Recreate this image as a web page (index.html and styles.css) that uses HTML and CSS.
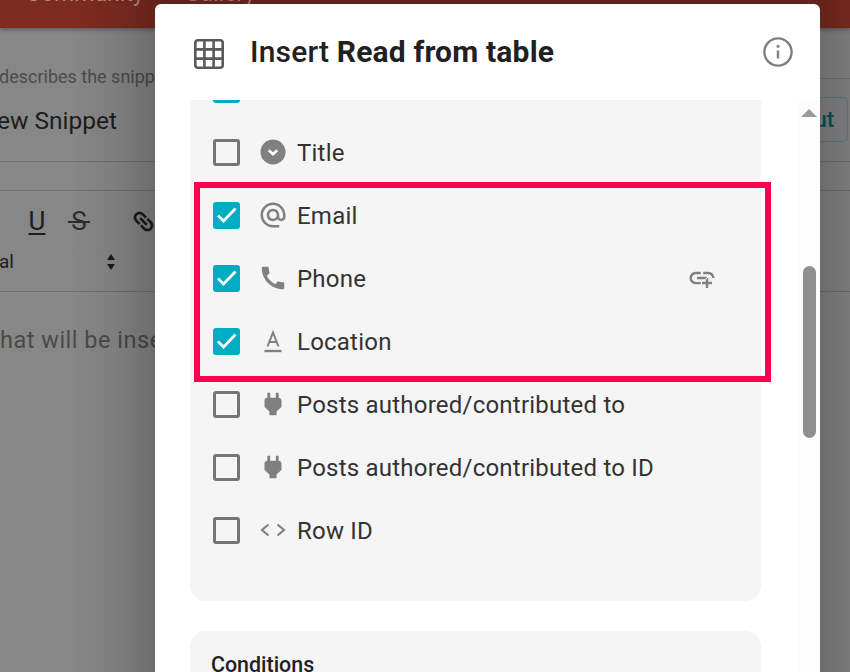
FILE: index.html
```html
<!DOCTYPE html>
<html lang="en">
<head>
<meta charset="utf-8">
<title>Insert Read from table</title>
<link rel="stylesheet" href="styles.css">
</head>
<body>
<div class="page">
  <header class="topbar">
    <span class="nav-item nav-community">Community</span>
    <span class="nav-item nav-gallery">Gallery</span>
  </header>
  <div class="label-row">
    <span class="label">describes the snipp</span>
    <span class="label-rule"></span>
  </div>
  <div class="name-row">
    <span class="name">ew Snippet</span>
    <span class="ghost-btn">ut</span>
  </div>
  <div class="strip"></div>
  <div class="toolbar">
    <div class="tool-line">
      <span class="tool tool-u">U</span>
      <span class="tool tool-s">S</span>
      <svg class="tool-link" viewBox="0 0 24 24"><path d="M3.9 12c0-1.71 1.39-3.1 3.1-3.1h4V7H7c-2.76 0-5 2.24-5 5s2.24 5 5 5h4v-1.9H7c-1.71 0-3.1-1.39-3.1-3.1zM8 13h8v-2H8v2zm9-6h-4v1.9h4c1.71 0 3.1 1.39 3.1 3.1s-1.39 3.1-3.1 3.1h-4V17h4c2.76 0 5-2.24 5-5s-2.24-5-5-5z"/></svg>
    </div>
    <div class="tool-line2">
      <span class="font-name">al</span>
      <svg class="sort" viewBox="0 0 10 16"><path d="M5 0l4 6H1zM5 16l-4-6h8z"/></svg>
    </div>
  </div>
  <div class="editor">hat will be inse</div>
</div>

<section class="modal">
  <div class="modal-head">
    <svg class="grid-icon" viewBox="0 0 30 30"><rect x="1.3" y="1.3" width="27.4" height="27.4" rx="2.5"/><path d="M10.4 1.5v27M19.6 1.500v27M1.5 10.4h27M1.5 19.6h27"/></svg>
    <h1 class="modal-title"><span class="title-light">Insert</span> Read from table</h1>
    <svg class="info-icon" viewBox="0 0 30 30"><circle cx="15" cy="15" r="13.6"/><path class="info-stem" d="M15 13.5v8"/><circle class="info-dot" cx="15" cy="9.3" r="1.5"/></svg>
  </div>
  <div class="modal-body">
    <div class="col">
      <div class="panel panel-fields">
        <div class="rows">
          <div class="row"><span class="box on"></span></div>
          <div class="row">
            <span class="box"></span>
            <svg class="ico" viewBox="0 0 30 30"><circle class="fill" cx="15" cy="15" r="12.5"/><path class="white-stroke" d="M10.8 13.3l4.2 4 4.2-4"/></svg>
            <span class="field">Title</span>
          </div>
          <div class="row">
            <span class="box on"><svg class="tick" viewBox="0 0 27 27"><path d="M5 13.500l5.500 5.500 12-12.500"/></svg></span>
            <svg class="ico" viewBox="0 0 24 24"><path class="fill" d="M12 1.95c-5.52 0-10 4.48-10 10s4.48 10 10 10h5v-2h-5c-4.34 0-8-3.66-8-8s3.66-8 8-8 8 3.66 8 8v1.43c0 .79-.71 1.57-1.5 1.57s-1.5-.78-1.5-1.57v-1.43c0-2.76-2.24-5-5-5s-5 2.24-5 5 2.24 5 5 5c1.38 0 2.64-.56 3.54-1.47.65.89 1.77 1.47 2.96 1.47 1.97 0 3.5-1.6 3.5-3.57v-1.43c0-5.52-4.48-10-10-10zm0 13c-1.66 0-3-1.34-3-3s1.34-3 3-3 3 1.34 3 3-1.34 3-3 3z"/></svg>
            <span class="field">Email</span>
          </div>
          <div class="row">
            <span class="box on"><svg class="tick" viewBox="0 0 27 27"><path d="M5 13.500l5.500 5.500 12-12.500"/></svg></span>
            <svg class="ico" viewBox="0 0 24 24"><path class="fill" d="M20.01 15.38c-1.23 0-2.42-.2-3.53-.56-.35-.12-.74-.03-1.01.24l-1.57 1.97c-2.83-1.35-5.48-3.9-6.89-6.83l1.95-1.66c.27-.28.35-.67.24-1.02-.37-1.11-.56-2.3-.56-3.53 0-.54-.45-.99-.99-.99H4.19C3.65 3 3 3.24 3 3.99 3 13.28 10.73 21 20.01 21c.71 0 .99-.63.99-1.18v-3.45c0-.54-.45-.99-.99-.99z"/></svg>
            <span class="field">Phone</span>
            <svg class="ico link-add" viewBox="0 0 24 24"><path class="fill" d="M8 11h8v2H8v-2zm12.1 1H22c0-2.76-2.24-5-5-5h-4v1.9h4c1.71 0 3.1 1.39 3.1 3.1zM3.9 12c0-1.71 1.39-3.1 3.1-3.1h4V7H7c-2.76 0-5 2.24-5 5s2.24 5 5 5h4v-1.9H7c-1.71 0-3.1-1.39-3.1-3.1zM17 12h-2v3h-3v2h3v3h2v-3h3v-2h-3v-3z"/></svg>
          </div>
          <div class="row">
            <span class="box on"><svg class="tick" viewBox="0 0 27 27"><path d="M5 13.500l5.500 5.500 12-12.500"/></svg></span>
            <svg class="ico" viewBox="0 0 30 30"><path class="thin" d="M9.500 20.500L15 6.500l5.500 14M11.500 16h7"/><path class="thick" d="M6.500 25h17"/></svg>
            <span class="field">Location</span>
          </div>
          <div class="row">
            <span class="box"></span>
            <svg class="ico" viewBox="0 0 24 24"><path class="fill" transform="translate(12 12) scale(1.13 1) translate(-12 -12)" d="M16.01 7L16 3h-2v4h-4V3H8v4h-.01C7 6.99 6 7.99 6 8.99v5.49L9.500 18v3h5v-3l3.500-3.510v-5.500c0-1-1-2-1.990-1.990z"/></svg>
            <span class="field">Posts authored/contributed to</span>
          </div>
          <div class="row">
            <span class="box"></span>
            <svg class="ico" viewBox="0 0 24 24"><path class="fill" transform="translate(12 12) scale(1.13 1) translate(-12 -12)" d="M16.01 7L16 3h-2v4h-4V3H8v4h-.01C7 6.99 6 7.99 6 8.99v5.49L9.500 18v3h5v-3l3.500-3.510v-5.500c0-1-1-2-1.990-1.990z"/></svg>
            <span class="field">Posts authored/contributed to ID</span>
          </div>
          <div class="row">
            <span class="box"></span>
            <svg class="ico" viewBox="0 0 30 30"><path class="chev" d="M10.500 9.500L4 15l6.500 5.500M19.500 9.500L26 15l-6.500 5.500"/></svg>
            <span class="field">Row ID</span>
          </div>
        </div>
      </div>
      <div class="panel panel-cond">
        <h2 class="cond-title">Conditions</h2>
      </div>
    </div>
    <div class="scrollbar">
      <span class="scroll-up"></span>
      <span class="scroll-thumb"></span>
    </div>
  </div>
  <div class="highlight"></div>
</section>
</body>
</html>
```
FILE: styles.css
```css
* { box-sizing: border-box; }
html, body { margin: 0; padding: 0; }
body {
  width: 850px;
  height: 672px;
  overflow: hidden;
  position: relative;
  font-family: Roboto, "Liberation Sans", sans-serif;
  background: #878787;
}
.page { width: 850px; height: 672px; overflow: hidden; position: relative; }
.page::after {
  content: "";
  position: absolute;
  inset: 0;
  background: linear-gradient(to right,
    rgba(0, 0, 0, 0) 70px,
    rgba(0, 0, 0, .07) 115px,
    rgba(0, 0, 0, .2) 155px,
    rgba(0, 0, 0, .2) 820px,
    rgba(0, 0, 0, .08) 860px);
}

.topbar {
  height: 28px;
  background: #7e2b20;
  box-shadow: 0 2px 4px rgba(0, 0, 0, .3);
  position: relative;
  display: flex;
  align-items: flex-end;
  overflow: hidden;
  padding: 0 0 19px 26px;
}
.nav-item { font-size: 23px; line-height: 30px; color: #b98d86; white-space: nowrap; }
.nav-gallery { margin-left: 41px; }

.label-row {
  height: 51px;
  display: flex;
  align-items: flex-end;
  justify-content: space-between;
}
.label { font-size: 18px; line-height: 24px; color: #4c4c4c; margin: 0 0 -10px -1px; white-space: nowrap; }
.label-rule { width: 30px; height: 1px; background: rgba(0, 0, 0, .14); }
.name-row {
  height: 83px;
  display: flex;
  justify-content: space-between;
  border-bottom: 1px solid rgba(0, 0, 0, .16);
  padding: 18px 2px 0 0;
}
.name { font-size: 24.500px; line-height: 48px; color: #1c1c1c; margin-left: -3px; white-space: nowrap; }
.ghost-btn {
  width: 60px;
  height: 45px;
  border: 1px solid #5b8082;
  border-radius: 5px;
  color: #07545c;
  font-size: 22px;
  font-weight: 500;
  line-height: 43px;
  text-align: right;
  padding-right: 13px;
}
.strip { height: 29px; border-bottom: 1px solid rgba(0, 0, 0, .16); }
.toolbar { height: 101px; border-bottom: 1px solid rgba(0, 0, 0, .16); }
.tool-line { height: 60px; display: flex; align-items: center; padding: 0 0 0 26px; }
.tool { width: 22px; font-size: 26px; line-height: 30px; text-align: center; color: #1c1c1c; }
.tool-u { text-decoration: underline; text-underline-offset: 3px; }
.tool-s {
  margin-left: 20px;
  color: #2b2b2b;
  background: linear-gradient(#2b2b2b, #2b2b2b) center 15px / 100% 2px no-repeat;
}
.tool-link { width: 27px; height: 27px; margin-left: 40px; fill: #1c1c1c; stroke: #1c1c1c; stroke-width: .5; transform: rotate(45deg); }
.tool-line2 { display: flex; align-items: center; height: 24px; margin-top: -1px; }
.font-name { font-size: 19px; line-height: 24px; color: #1c1c1c; margin-left: -1px; }
.sort { width: 10px; height: 16px; margin-left: 92px; fill: #1c1c1c; }
.editor { font-size: 23.500px; line-height: 30px; color: #4a4a4a; padding-top: 33px; letter-spacing: .5px; white-space: nowrap; }

.modal {
  position: absolute;
  left: 155px;
  top: 4px;
  width: 665px;
  height: 668px;
  background: #fff;
  border-radius: 6px 6px 0 0;
  overflow: hidden;
}
.modal-head { height: 96px; display: flex; align-items: center; padding: 0 27px 0 39px; }
.grid-icon { width: 30px; height: 30px; margin-top: 4px; fill: none; stroke: #5a5a5a; stroke-width: 2.6; }
.modal-title {
  margin: 0 0 0 26px;
  flex: 1;
  font-size: 30px;
  font-weight: 700;
  letter-spacing: .18px;
  line-height: 36px;
  color: #212121;
}
.title-light { font-weight: 500; }
.info-icon { width: 30px; height: 30px; fill: none; stroke: #808080; stroke-width: 2.4; }
.info-icon .info-dot { fill: #808080; stroke: none; }

.modal-body { display: flex; height: 572px; }
.col { width: 571px; margin-left: 35px; flex: none; }
.panel { background: #f5f5f5; overflow: hidden; }
.panel-fields { height: 501px; border-radius: 0 0 16px 16px; }
.rows { margin-top: -42.5px; }
.row { height: 63px; display: flex; align-items: center; padding: 0 44.5px 0 23px; }
.box {
  width: 27px;
  height: 27px;
  flex: none;
  border: 3px solid #757575;
  border-radius: 3px;
}
.box.on { background: #00acc1; border: 0; }
.tick { display: block; width: 27px; height: 27px; fill: none; stroke: #fff; stroke-width: 2.7; }
.ico { width: 30px; height: 30px; flex: none; margin-left: 18px; }
.fill { fill: #808080; }
.white-stroke { fill: none; stroke: #fff; stroke-width: 2.6; }
.thin { fill: none; stroke: #808080; stroke-width: 2; }
.thick { fill: none; stroke: #808080; stroke-width: 2.4; }
.chev { fill: none; stroke: #808080; stroke-width: 2.200; }
.field { margin: 1px 0 0 9px; font-size: 24px; letter-spacing: .22px; line-height: 30px; color: #333; white-space: nowrap; }
.link-add { margin-left: auto; }
.panel-cond { margin-top: 30px; height: 41px; border-radius: 16px 16px 0 0; padding: 27px 0 0 21px; }
.cond-title { margin: 0; font-size: 21.400px; font-weight: 500; line-height: 14px; color: #212121; }

.scrollbar {
  width: 22px;
  margin-left: 37px;
  background: #fcfcfc;
  display: flex;
  flex-direction: column;
  align-items: center;
  flex: none;
}
.scroll-up {
  margin-top: 9px;
  width: 0;
  height: 0;
  border-left: 8px solid transparent;
  border-right: 8px solid transparent;
  border-bottom: 8px solid #9a9a9a;
}
.scroll-thumb {
  margin-top: 149px;
  width: 13px;
  height: 172px;
  border-radius: 7px;
  background: #8f8f8f;
}

.highlight {
  position: absolute;
  left: 39px;
  top: 178px;
  width: 577px;
  height: 200px;
  border: 6px solid #ff0050;
}
```
